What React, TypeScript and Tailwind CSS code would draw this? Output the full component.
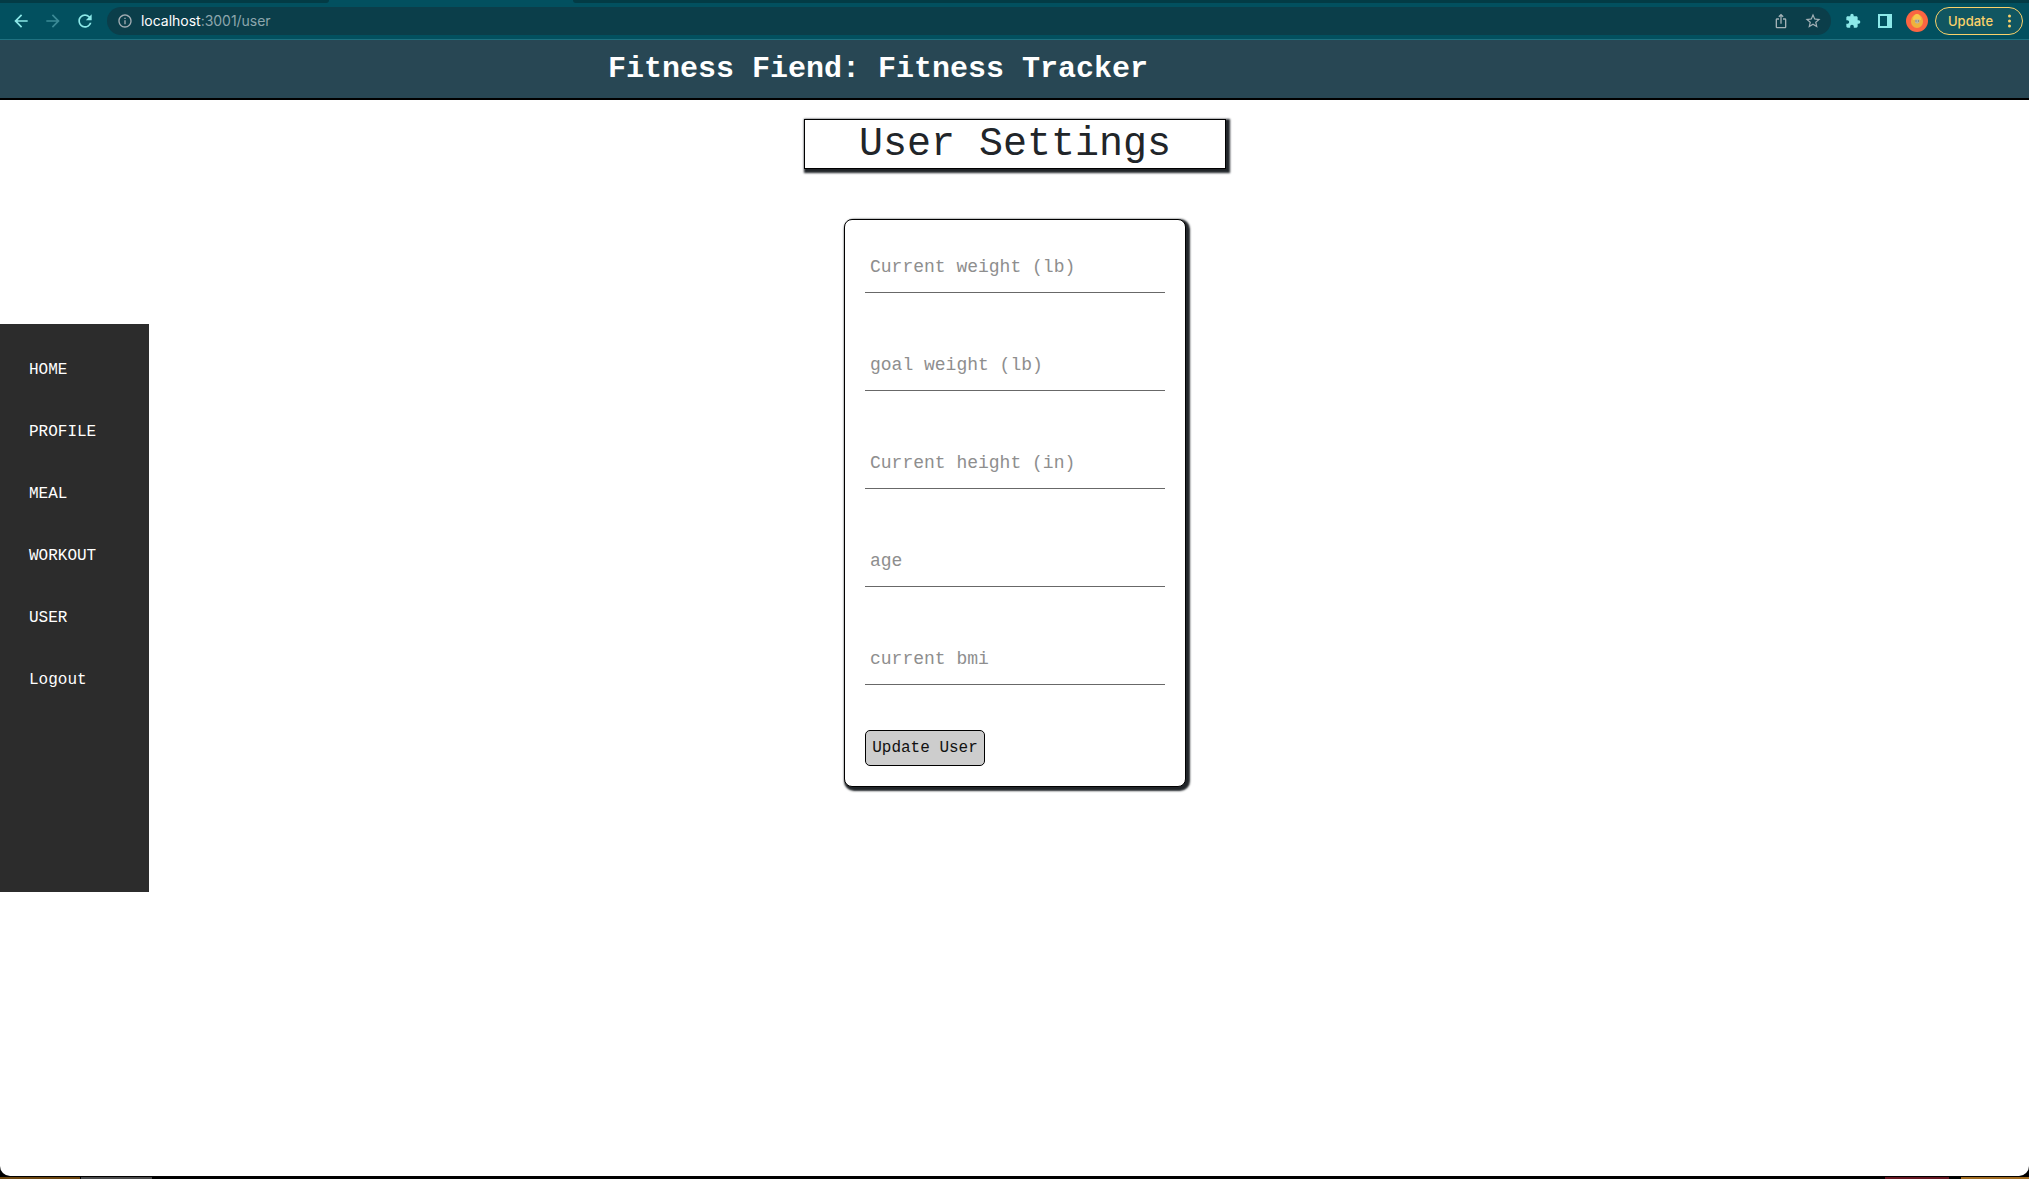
import { MdArrowBack, MdArrowForward, MdRefresh, MdInfoOutline, MdStarBorder, MdExtension, MdOutlineIosShare } from "react-icons/md";

const mono = "font-['Courier_New','Liberation_Mono',monospace]";
const fields = ["Current weight (lb)", "goal weight (lb)", "Current height (in)", "age", "current bmi"];
const links = ["HOME", "PROFILE", "MEAL", "WORKOUT", "USER", "Logout"];

function BrowserBar() {
  return (
    <div className="h-10 bg-[#02505f] border-b border-[#1f7180] flex flex-col font-['Inter','Liberation_Sans',sans-serif]">
      <div className="h-[3px] flex justify-between shrink-0">
        <div className="w-[329px] bg-[#033b45] rounded-br" />
        <div className="w-[1456px] bg-[#033b45] rounded-bl" />
      </div>
      <div className="h-9 flex items-center">
        <MdArrowBack className="ml-[11px] size-5 text-[#8ce8e8]" />
        <MdArrowForward className="ml-3 size-5 text-[#3b8a96]" />
        <MdRefresh className="ml-3 size-5 text-[#8ce8e8]" />
        <div className="ml-[12px] w-[1724px] h-7 rounded-full bg-[#0b3e4a] flex items-center pl-[10px] pr-[9px]">
          <MdInfoOutline className="size-4 text-[#a3adb3]" />
          <div className="ml-[8px] text-[14px] leading-5 text-[#8da6ad] tracking-[-0.02px]">
            <span className="text-white">localhost</span>:3001/user
          </div>
          <MdOutlineIosShare className="ml-auto size-4 text-[#a3b1b6]" />
          <MdStarBorder className="ml-[15px] size-[18px] text-[#a3b1b6]" />
        </div>
        <MdExtension className="ml-[14px] size-4 text-[#8ce8e8]" />
        <svg className="ml-[17px] size-[14px]" viewBox="0 0 14 14">
          <path fill="#8ce8e8" fillRule="evenodd" d="M0 0h14v14H0zM2 2v10h7V2z" />
        </svg>
        <svg className="ml-[14px] size-[22px]" viewBox="0 0 22 22">
          <circle cx="11" cy="11" r="11" fill="#fb6542" />
          <path d="M11 4c3.500 0 6 4 6 7.500s-2.500 6.500-6 6.500-6-3-6-6.500S7.500 4 11 4z" fill="#eeb13c" />
          <path d="M11 4c2 0 4 2.500 4 6H7c0-3.500 2-6 4-6z" fill="#f8c64d" />
          <path d="M9 9.500h4.500v3l-1.500 1h-1.500l-1.500-1z" fill="#b9b2a4" />
          <path d="M9.500 10.500h1v1h-1zM12 10.500h1v1h-1z" fill="#6d6a67" />
        </svg>
        <div className="ml-[7px] w-[88px] h-7 rounded-full border border-[#fbd26a] bg-[#115661] text-[#fbd26a] flex items-center pl-[12px] text-[13px] font-medium">
          <span className="relative top-px">Update</span>
          <svg className="ml-auto mr-[11px] w-[3px] h-[14px]" viewBox="0 0 3 14" fill="currentColor">
            <circle cx="1.500" cy="2" r="1.500" /><circle cx="1.500" cy="7" r="1.500" /><circle cx="1.500" cy="12" r="1.500" />
          </svg>
        </div>
      </div>
    </div>
  );
}

export default function App() {
  return (
    <div className="w-[2029px] h-[1179px] overflow-hidden bg-black flex flex-col">
      <div className="h-[1176px] shrink-0 bg-white rounded-b-[10px] overflow-hidden">
        <BrowserBar />
        <header className="h-[60px] bg-[#284754] border-b-2 border-black pl-[608px] pt-[10px]">
          <h1 className={`${mono} font-bold text-[30px] leading-[38px] text-white whitespace-pre`}>Fitness Fiend: Fitness Tracker</h1>
        </header>
        <div className="flex">
          <nav className={`${mono} mt-[224px] w-[149px] h-[568px] bg-[#2c2c2c] pt-[15px] pl-[29px] flex flex-col text-[16px] text-white`}>
            {links.map((l) => (
              <a key={l} className="h-[62px] flex items-center"><span className="block h-6 leading-6">{l}</span></a>
            ))}
          </nav>
          <main className="w-[1732px] pt-[19px] flex flex-col items-center">
            <h2 className={`${mono} w-[422px] h-[50px] border border-black bg-white shadow-[2px_2px_2px_2px_#212529] text-[40px] leading-[50px] text-center text-[#212529]`}>User Settings</h2>
            <form className={`${mono} mt-[50px] w-[342px] h-[568px] border border-black rounded-[8px] bg-white shadow-[2px_2px_2px_2px_#212529] px-5 pt-5`}>
              {fields.map((f) => (
                <div key={f} className="h-[98px]">
                  <input placeholder={f} className="block w-[300px] h-[53px] border-b border-[#686868] pl-[5px] pt-px text-[18px] placeholder:text-[#8e8e8e] outline-none" />
                </div>
              ))}
              <button type="button" className="block w-[120px] h-9 border border-black rounded-[5px] bg-[#cdcdcd] text-[16px] leading-[34px] text-[#111]">Update User</button>
            </form>
          </main>
        </div>
      </div>
      <div className="mt-px h-[2px] flex shrink-0">
        <div className="w-20 bg-[#6b450f]" />
        <div className="ml-px w-[71px] bg-[#4b4b4b]" />
        <div className="ml-auto w-16 bg-[#651620]" />
        <div className="ml-3 w-[68px] bg-[#a06b20]" />
      </div>
    </div>
  );
}
